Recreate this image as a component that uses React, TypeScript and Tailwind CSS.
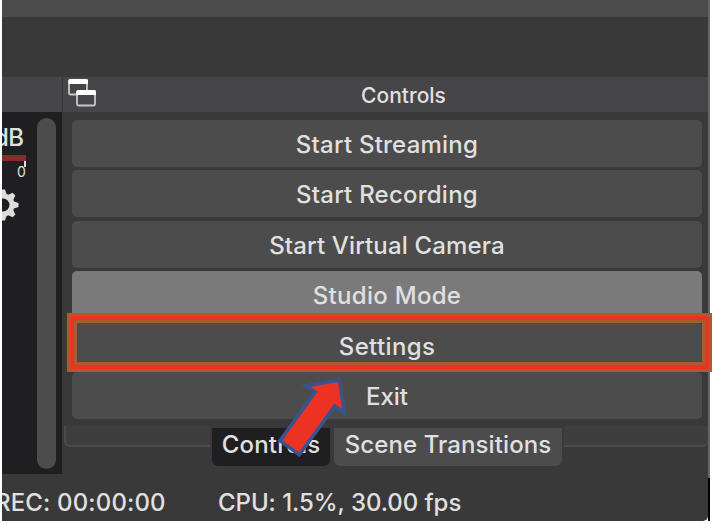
import React from "react";

const buttons = [
  { label: "Start Streaming", cls: "bg-[#4c4c4c] tracking-[0.23px]" },
  { label: "Start Recording", cls: "bg-[#4c4c4c] tracking-[0.23px]" },
  { label: "Start Virtual Camera", cls: "bg-[#4c4c4c] tracking-[0.15px]" },
  { label: "Studio Mode", cls: "bg-[#7a7a7a] tracking-[0.3px]" },
  { label: "Settings", cls: "bg-[#4c4c4c] tracking-[0.35px]" },
  { label: "Exit", cls: "bg-[#4c4c4c] tracking-[0px]" },
];

function DockIcon() {
  return (
    <svg className="ml-[5px] h-[28px] w-[29px] shrink-0" viewBox="0 0 29 28" fill="none">
      <rect x="1" y="1" width="18" height="14.5" rx="1.5" stroke="#c8c8c8" strokeWidth="1.8" />
      <path d="M.5 1.5q0-1.5 1.5-1.5h16.5q1.5 0 1.5 1.5V5H.5z" fill="#fff" />
      <rect x="9" y="12" width="18" height="14.5" rx="1.5" fill="#464547" stroke="#c8c8c8" strokeWidth="1.8" />
      <path d="M8.5 12.5q0-1.5 1.5-1.5h16.5q1.5 0 1.5 1.5V16H8.5z" fill="#fff" />
    </svg>
  );
}

function Mixer() {
  return (
    <aside className="flex w-[60px] shrink-0 flex-col">
      <div className="h-[35px] bg-[#464547]" />
      <div className="flex h-[362px] justify-between bg-[#1f1e20] pr-[6px]">
        <div className="w-[26px] overflow-hidden pt-[11px]">
          <div className="-ml-[8px] h-[32px] text-[24px] leading-[29px] font-medium tracking-[-0.5px]">dB</div>
          <div className="h-[6px] w-[24px] bg-[#872b2b]" />
          <div className="ml-[22px] h-[6px] w-[2px] bg-[#e0e0e0]" />
          <div className="ml-[15px] h-[10px] text-[14px] leading-[10px]">0</div>
          <svg className="mt-[12px] -ml-[15px] h-[32px] w-[32px]" viewBox="-16 -16 32 32">
            <g fill="#dedede">
              {[0, 45, 90, 135].map((a) => (
                <path key={a} d="M-3.5-11L-2-15.5H2L3.5-11V11L2 15.5H-2L-3.5 11Z" transform={`rotate(${a})`} />
              ))}
              <circle r="11.5" />
            </g>
            <circle r="6.5" fill="#1f1e20" />
          </svg>
        </div>
        <div className="mt-[6px] h-[351px] w-[19px] rounded-full bg-[#4c4c4c]" />
      </div>
    </aside>
  );
}

function Controls() {
  return (
    <section className="flex w-[645px] flex-col">
      <header className="flex h-[35px] items-start bg-[#464547] pt-[2px]">
        <DockIcon />
        <h2 className="flex-1 pl-[2px] text-center text-[21px] leading-[34px] font-medium">Controls</h2>
      </header>
      <div className="flex flex-col gap-[3.4px] pt-[8px] pr-[6px] pl-[9px]">
        {buttons.map((b) => (
          <button key={b.label} className={`h-[47px] rounded-[5px] text-center text-[24px] leading-[49px] font-medium ${b.cls}`}>
            {b.label}
          </button>
        ))}
      </div>
      <div className="mt-[7px] flex h-[40px] items-start">
        <div className="ml-[1px] h-[21px] w-[146px] rounded-bl-[6px] border-b-2 border-l-2 border-[#4c4c4c] bg-[#3e3e3e]" />
        <div className="mt-[2px] ml-[2px] h-[38px] w-[118px] rounded-b-[6px] bg-[#1f1e20] text-center text-[24px] leading-[34px] font-medium tracking-[0.2px]">Controls</div>
        <div className="mt-[2px] ml-[4px] h-[38px] w-[228px] rounded-b-[6px] bg-[#4c4c4c] text-center text-[24px] leading-[34px] font-medium tracking-[0.1px]">Scene Transitions</div>
        <div className="ml-[2px] h-[21px] flex-1 rounded-br-[5px] border-b-2 border-[#4c4c4c] bg-[#3e3e3e]" />
      </div>
    </section>
  );
}

export default function App() {
  return (
    <div className="relative flex h-[524px] w-[712px] overflow-hidden bg-white pb-[3px] pl-[2px] font-['Inter',sans-serif] whitespace-nowrap text-[#e0e0e0]">
      <main className="flex w-[706px] flex-col overflow-hidden rounded-br-[5px] bg-[#393939]">
        <div className="h-[17px] shrink-0 bg-[#4c4c4c]" />
        <div className="mt-[60px] flex h-[397px] shrink-0">
          <Mixer />
          <div className="w-px shrink-0 bg-[#363636]" />
          <Controls />
        </div>
        <footer className="flex h-[47px] items-center pt-[11px] text-[24px] leading-[30px] font-medium">
          <span className="-ml-[7px] w-[223px] tracking-[0.15px]">REC: 00:00:00</span>
          <span className="tracking-[-0.05px]">CPU: 1.5%, 30.00 fps</span>
        </footer>
      </main>
      <div className="flex w-[2px] flex-col bg-black">
        <div className="h-[478px] bg-[#666]" />
      </div>
      <div className="absolute top-[313px] left-[67px] h-[59px] w-[645px] border-3 border-[#a65f2c]">
        <div className="h-full border-4 border-[#ec3323]">
          <div className="h-full border-3 border-[#a65f2c]" />
        </div>
      </div>
      <svg className="absolute top-[370px] left-[270px] h-[100px] w-[90px]" viewBox="270 370 90 100">
        <path d="M339.5 380L306 385.7L315.3 392L280 440.7L299.3 454.7L334.7 406L344.3 412.5Z" fill="#ec3323" stroke="#36558f" strokeWidth="3.5" strokeMiterlimit="10" />
      </svg>
    </div>
  );
}
